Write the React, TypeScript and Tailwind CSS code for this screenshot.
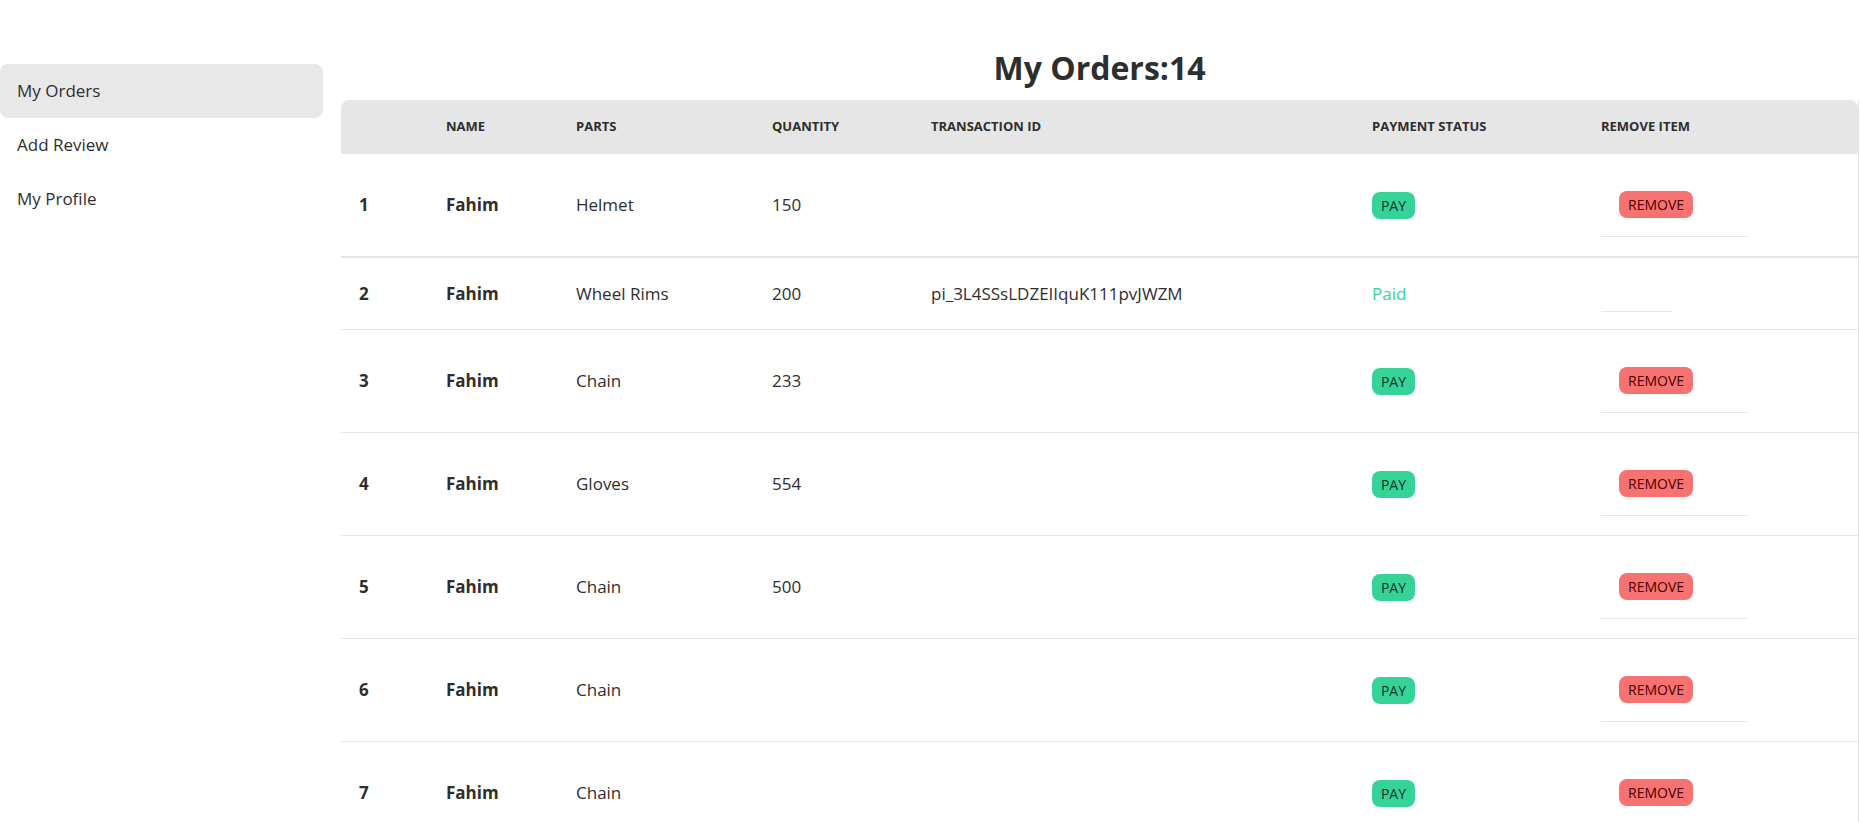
const orders = [
  { id: 1, name: "Fahim", part: "Helmet", qty: "150", tx: "", paid: false },
  { id: 2, name: "Fahim", part: "Wheel Rims", qty: "200", tx: "pi_3L4SSsLDZEIIquK111pvJWZM", paid: true },
  { id: 3, name: "Fahim", part: "Chain", qty: "233", tx: "", paid: false },
  { id: 4, name: "Fahim", part: "Gloves", qty: "554", tx: "", paid: false },
  { id: 5, name: "Fahim", part: "Chain", qty: "500", tx: "", paid: false },
  { id: 6, name: "Fahim", part: "Chain", qty: "", tx: "", paid: false },
  { id: 7, name: "Fahim", part: "Chain", qty: "", tx: "", paid: false },
];

const heads = ["", "Name", "Parts", "Quantity", "Transaction ID", "Payment Status", "Remove Item"];

export default function App() {
  return (
    <div
      className="min-h-screen bg-white text-[#2e2e2e] flex"
      style={{ fontFamily: '"Open Sans", "Noto Sans", sans-serif' }}
    >
      {/* Sidebar */}
      <aside className="w-[323px] shrink-0 pt-[64px]">
        <ul className="flex flex-col text-[17px]">
          <li className="h-[54px] flex items-center px-[17px] rounded-lg bg-[#e8e8e8]">My Orders</li>
          <li className="h-[54px] flex items-center px-[17px]">Add Review</li>
          <li className="h-[54px] flex items-center px-[17px]">My Profile</li>
        </ul>
      </aside>

      {/* Main */}
      <main className="flex-1 pl-[18px] pt-[49px]">
        <h1 className="text-[32px] leading-[38px] font-bold text-center mb-[13px] pr-[2px]">My Orders:14</h1>
        <div className="w-[1518px] border-r border-[#e3e3e3]">
          <table className="w-[1517px] table-fixed border-collapse text-left text-[17px]">
            <colgroup>
              <col className="w-[87px]" />
              <col className="w-[130px]" />
              <col className="w-[196px]" />
              <col className="w-[159px]" />
              <col className="w-[441px]" />
              <col className="w-[229px]" />
              <col className="w-[275px]" />
            </colgroup>
            <thead>
              <tr className="bg-[#e6e6e6]">
                {heads.map((h, i) => (
                  <th
                    key={i}
                    className={`h-[54px] px-[18px] text-[13px] font-bold uppercase ${
                      i === 0 ? "rounded-tl-lg" : ""
                    } ${i === heads.length - 1 ? "rounded-tr-lg" : ""}`}
                  >
                    {h}
                  </th>
                ))}
              </tr>
            </thead>
            <tbody>
              {orders.map((o, idx) => {
                const pad = o.paid ? "px-[18px] py-[17px]" : "px-[18px] py-[19px]";
                return (
                  <tr
                    key={o.id}
                    className={idx === 0 ? "border-b-2 border-[#e5e5e5]" : "border-b border-[#e5e5e5]"}
                  >
                    <td className={`${pad} font-bold`}>{o.id}</td>
                    <td className={`${pad} font-bold`}>{o.name}</td>
                    <td className={pad}>{o.part}</td>
                    <td className={pad}>{o.qty}</td>
                    <td className={pad}>{o.tx}</td>
                    <td className={pad}>
                      {o.paid ? (
                        <span className="text-[#36d399]">Paid</span>
                      ) : (
                        <button className="h-[27px] w-[43px] rounded-lg bg-[#36d399] text-[#0b3325] text-[14px] uppercase flex items-center justify-center">
                          Pay
                        </button>
                      )}
                    </td>
                    <td className={pad}>
                      {o.paid ? (
                        <div className="w-[71px] h-[37px] border-b border-[#e5e5e5]" />
                      ) : (
                        <div className="w-[146px] py-[18px] pl-[18px] border-b border-[#e5e5e5]">
                          <button className="h-[27px] w-[74px] rounded-lg bg-[#f87272] text-[#470000] text-[14px] uppercase flex items-center justify-center">
                            Remove
                          </button>
                        </div>
                      )}
                    </td>
                  </tr>
                );
              })}
            </tbody>
          </table>
        </div>
      </main>
    </div>
  );
}
